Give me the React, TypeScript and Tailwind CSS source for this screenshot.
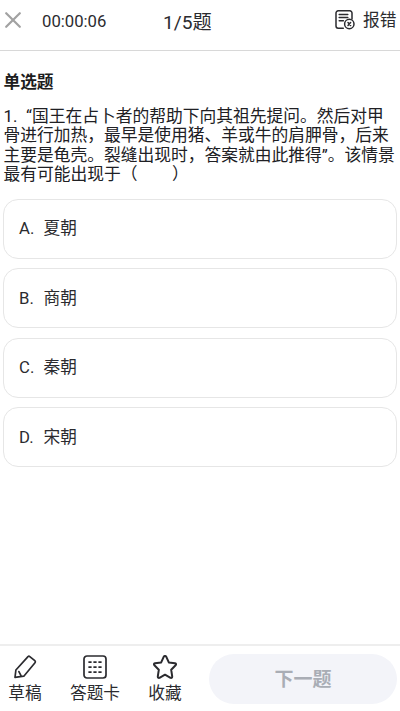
import React from "react";

const options = [
  { key: "A", text: "夏朝" },
  { key: "B", text: "商朝" },
  { key: "C", text: "秦朝" },
  { key: "D", text: "宋朝" },
];

function ReportIcon() {
  return (
    <svg width="20" height="20" viewBox="0 0 20 20" fill="none" stroke="#2b2b2f" strokeWidth="1.5" strokeLinecap="round">
      <path d="M8.3 18.2H3.2a2.2 2.2 0 0 1-2.2-2.2V3a2.2 2.2 0 0 1 2.2-2.2h11.6A2.2 2.2 0 0 1 17 3v6" />
      <path d="M4.2 4.4h8.6M4.2 7.6h8.6M4.2 10.8h4.2" />
      <circle cx="14.3" cy="14" r="4.7" />
      <path d="m13 12.6 2.6 2.8m0-2.8-2.6 2.8" />
    </svg>
  );
}

function PencilIcon() {
  return (
    <svg width="24" height="24" viewBox="0 0 24 24" fill="none" stroke="#2b2b2f" strokeWidth="1.7" strokeLinejoin="round" strokeLinecap="round">
      <path d="M15 1.6a1.4 1.4 0 0 1 1.8 0l5 4.1a1.4 1.4 0 0 1 .2 2L10.8 21.2 2 22.4 2.9 15Z" />
      <path d="M5.9 16.6 8 20.6" />
    </svg>
  );
}

function CardIcon() {
  return (
    <svg width="24" height="24" viewBox="0 0 24 24" fill="none" stroke="#2b2b2f" strokeWidth="1.7">
      <rect x="1" y="1" width="22" height="22" rx="3" />
      <path d="M5.4 7.1h13.2M5.4 12.1h13.2M5.4 17.1h13.2" strokeDasharray="3.2 1.8" />
    </svg>
  );
}

function StarIcon() {
  return (
    <svg width="24" height="24" viewBox="0 0 24 24" fill="none" stroke="#2b2b2f" strokeWidth="2" strokeLinejoin="round">
      <path d="M10.8 1.7Q12 .2 13.2 1.7L15.8 7.4 22 8.3Q23.8 8.9 22.6 10.3L18.2 14.8 19.2 21.4Q19.2 23.3 17.5 22.8L12 19.7 6.5 22.8Q4.8 23.3 4.8 21.4L5.8 14.8 1.4 10.3Q.2 8.9 2 8.3L8.2 7.4Z" />
    </svg>
  );
}

export default function App() {
  return (
    <div className="flex h-[711px] w-[400px] flex-col overflow-hidden bg-white font-[Roboto,'Noto_Sans_CJK_SC',sans-serif] text-[#2b2b2f]">
      <header className="flex h-[51px] shrink-0 border-b border-[#d8d8d8] whitespace-nowrap">
        <svg className="mt-3 ml-[5px] shrink-0" width="16" height="16" viewBox="0 0 16 16" stroke="#a2a2a2" strokeWidth="2.2" strokeLinecap="round">
          <path d="M1.2 1.2 14.8 14.8M14.8 1.2 1.2 14.8" />
        </svg>
        <div className="mt-[10px] ml-[21px] w-[121px] text-[16.7px] leading-[24px]">00:00:06</div>
        <div className="mt-[10px] w-[172px] text-[19.2px] leading-[26px]">1/5题</div>
        <div className="mt-[10px]"><ReportIcon /></div>
        <div className="mt-[9px] ml-[8px] text-[16.7px] leading-[24px]">报错</div>
      </header>

      <main className="flex grow flex-col px-[3px]">
        <h1 className="mt-[20px] pl-[0.5px] text-[16.7px] leading-[24px] font-bold text-[#1d1d20]">单选题</h1>
        <div className="mt-[11.5px] pl-[0.5px] text-[16.75px] leading-[19.6px] whitespace-nowrap text-[#202024]">
          <div className="flex"><span className="w-[22.5px]">1.</span><span className="w-[6px]">“</span><span>国王在占卜者的帮助下向其祖先提问。然后对甲</span></div>
          <div>骨进行加热，最早是使用猪、羊或牛的肩胛骨，后来</div>
          <div>主要是龟壳。裂缝出现时，答案就由此推得”。该情景</div>
          <div className="whitespace-pre">最有可能出现于（<span className="inline-block w-[34.5px]" />）</div>
        </div>
        <div className="mt-[14px] flex flex-col gap-[9.5px]">
          {options.map((o) => (
            <div key={o.key} className="flex h-[60px] items-center rounded-[15px] border border-[#e6e6e6] pt-[1px] pl-[15px] text-[16.7px] leading-[24px]">
              <span className="w-[24.5px]">{o.key}.</span>
              <span>{o.text}</span>
            </div>
          ))}
        </div>
      </main>

      <footer className="flex h-[67px] shrink-0 border-t-2 border-[#eeeeee] text-[16.7px] leading-[24px] whitespace-nowrap">
        <div className="ml-[8px] flex w-[34px] flex-col items-center gap-[3px] pt-[9px]"><PencilIcon /><span>草稿</span></div>
        <div className="ml-[28px] flex w-[50px] flex-col items-center gap-[3px] pt-[9px]"><CardIcon /><span>答题卡</span></div>
        <div className="ml-[28px] flex w-[34px] flex-col items-center gap-[3px] pt-[9px]"><StarIcon /><span>收藏</span></div>
        <button className="mt-[8px] ml-[27px] flex h-[50px] w-[188px] items-center justify-center rounded-full bg-[#f3f4f9] pt-[2px] text-[19px] font-bold text-[#a9adb5]">下一题</button>
      </footer>
    </div>
  );
}
